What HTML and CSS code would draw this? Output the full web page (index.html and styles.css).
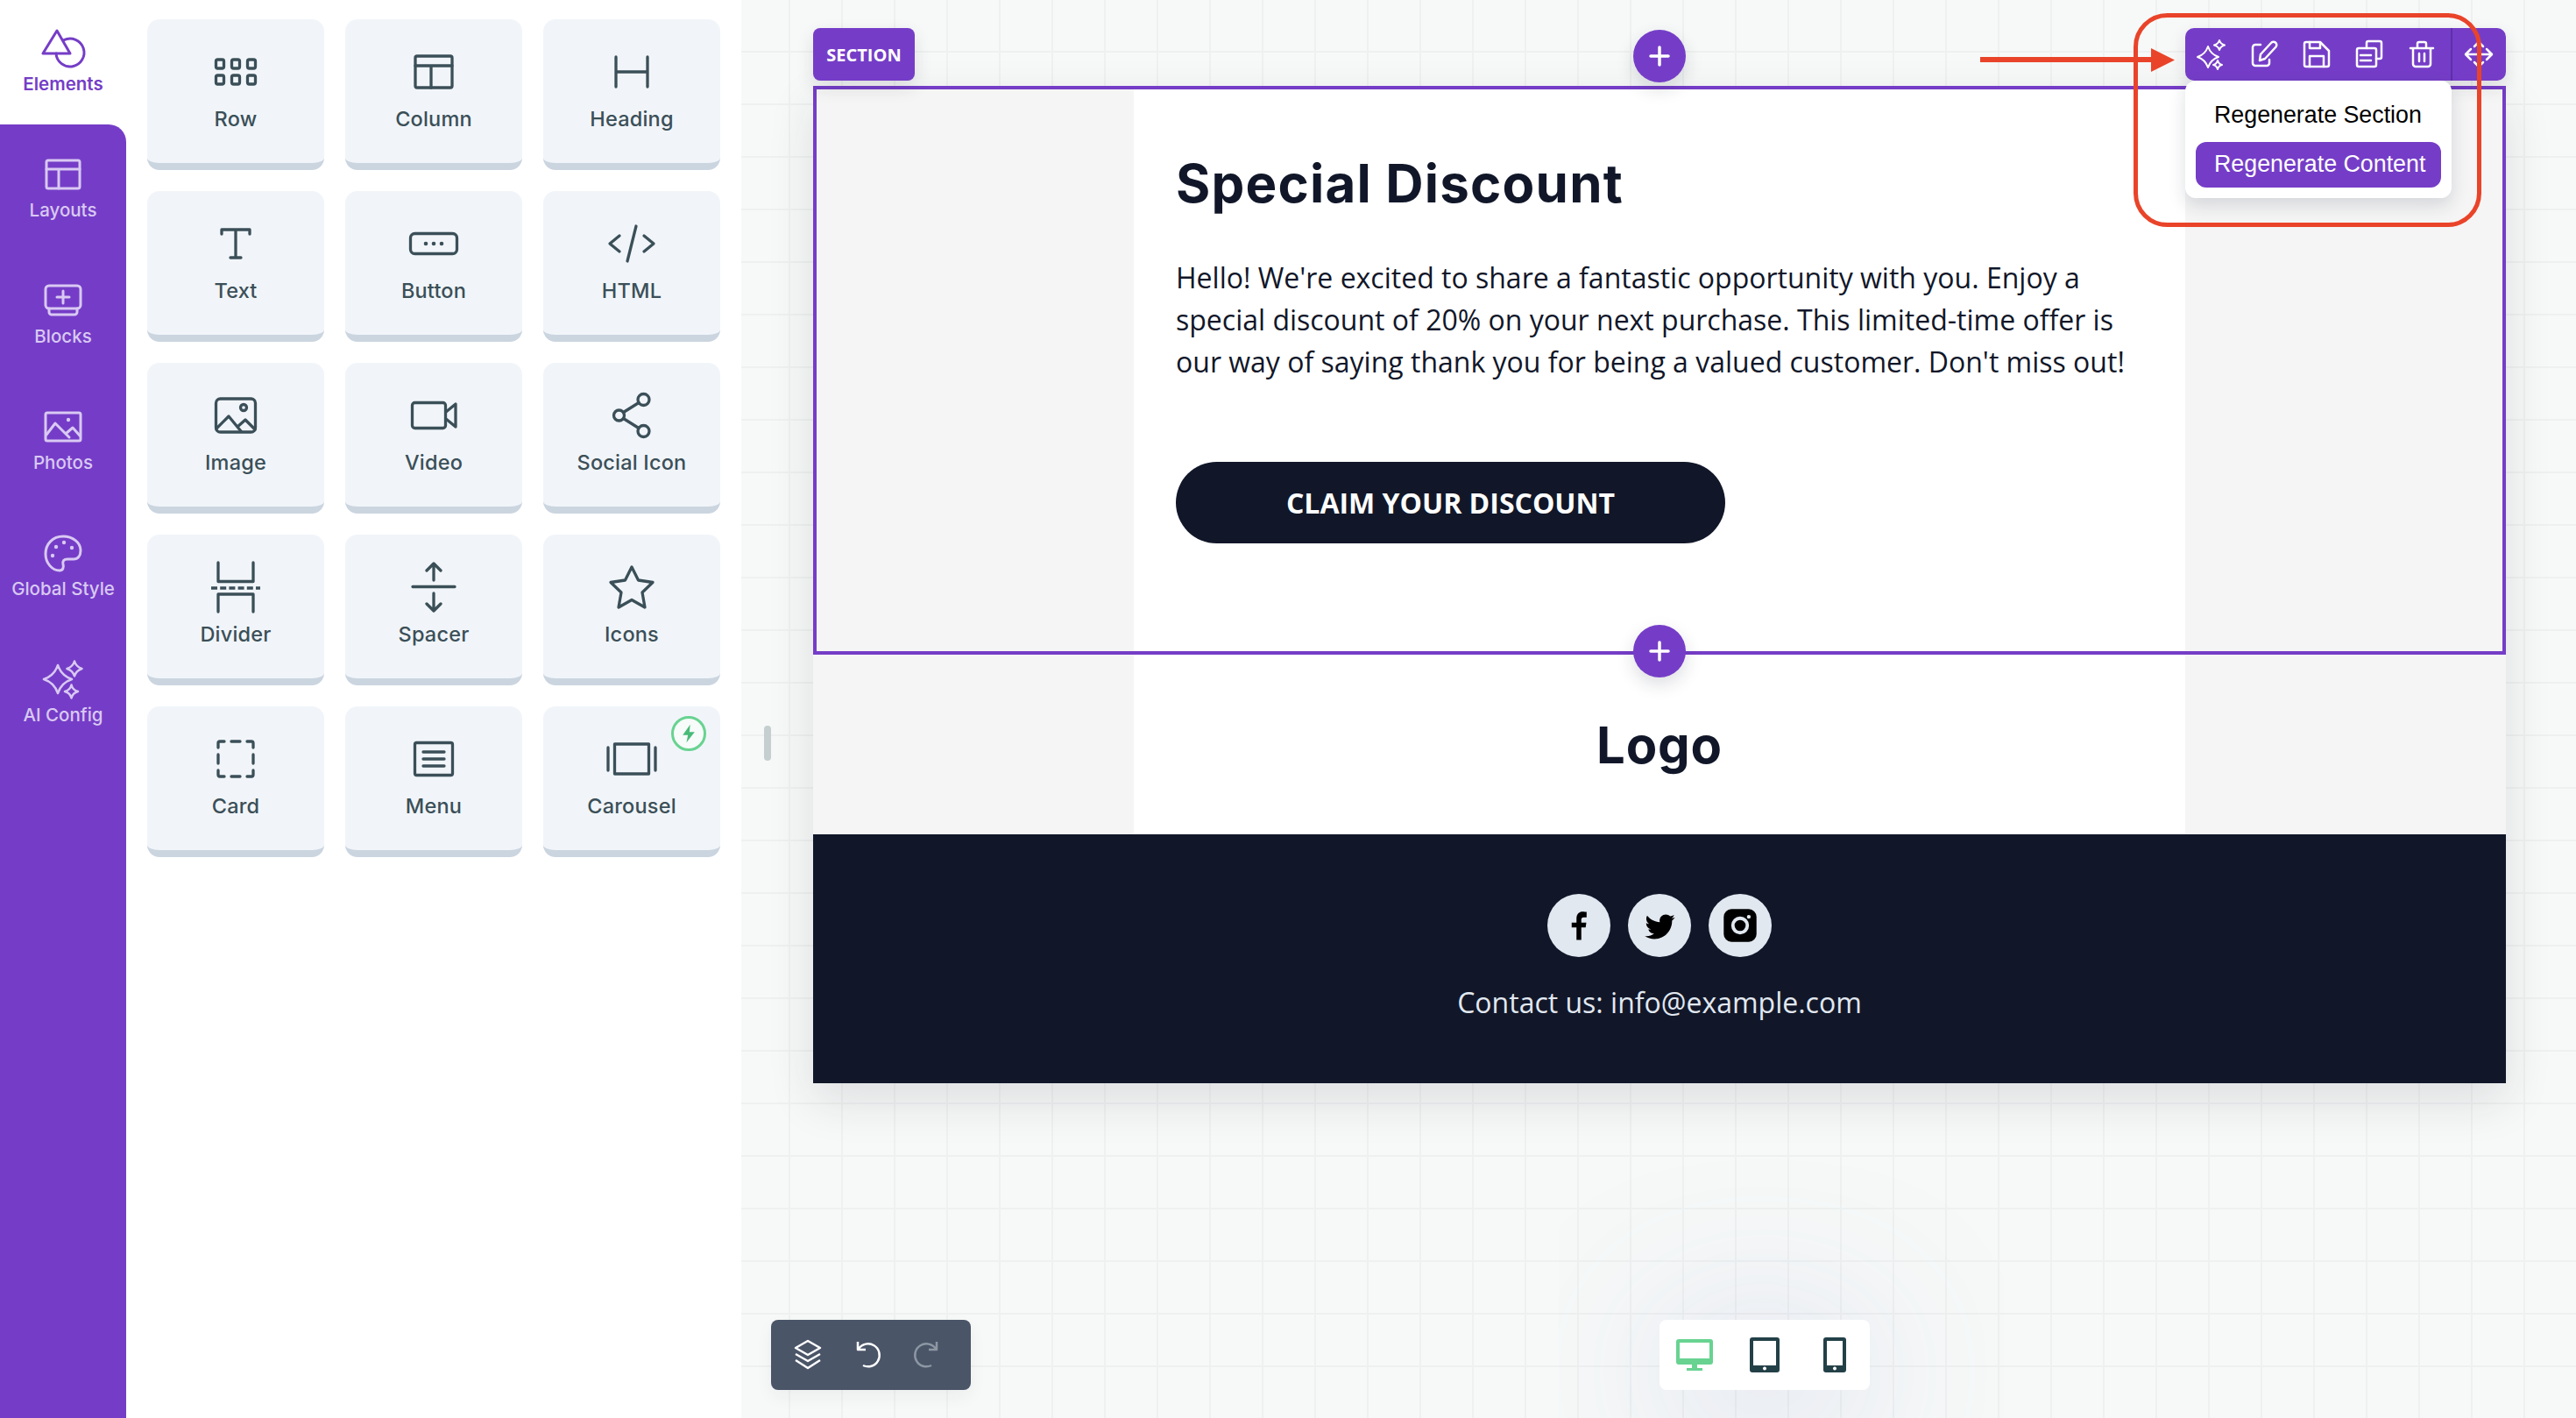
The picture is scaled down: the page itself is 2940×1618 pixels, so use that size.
FILE: index.html
```html
<!DOCTYPE html>
<html lang="en">
<head>
<meta charset="utf-8">
<title>Email builder</title>
<link rel="stylesheet" href="styles.css">
</head>
<body>
<div class="app">
  <nav class="rail">
    <div class="rail-item active">
      <svg class="rail-icon" viewBox="0 0 60 60"><path d="M23 10 7 36H38Z"/><path d="M31 20.600A16 16 0 1 1 22 36"/></svg>
      <span>Elements</span>
    </div>
    <div class="rail-list">
      <div class="rail-item">
        <svg class="rail-icon" viewBox="0 0 60 60"><rect x="11" y="14" width="38" height="32" rx="2"/><path d="M11 24H49M25 24V46"/></svg>
        <span>Layouts</span>
      </div>
      <div class="rail-item">
        <svg class="rail-icon" viewBox="0 0 60 60"><rect x="10" y="13" width="40" height="26" rx="4"/><path d="M30 19V33M23 26H37M14 39V43a3 3 0 0 0 3 3H43a3 3 0 0 0 3-3V39"/></svg>
        <span>Blocks</span>
      </div>
      <div class="rail-item">
        <svg class="rail-icon" viewBox="0 0 60 60"><rect x="10" y="14" width="40" height="32" rx="2"/><path d="M11 39 21 26 37 42M34 37 41 31 49 40"/><circle cx="36" cy="22" r="2.200"/></svg>
        <span>Photos</span>
      </div>
      <div class="rail-item">
        <svg class="rail-icon" viewBox="0 0 60 60"><path d="M30 11C18 11 10 20 10 31 10 42 18 50 26 50 30 50 31 46 30 43 29 39 31 37 35 37H42C47 37 50 33 50 27 50 18 41 11 30 11Z"/><circle cx="22" cy="23" r="2.200"/><circle cx="31" cy="18" r="2.200"/><circle cx="40" cy="24" r="2.200"/><circle cx="18" cy="33" r="2.200"/></svg>
        <span>Global Style</span>
      </div>
      <div class="rail-item">
        <svg class="rail-icon thin" viewBox="0 0 60 60"><path d="M24 14Q28 26 40 30 28 34 24 46 20 34 8 30 20 26 24 14Z"/><path d="M43 9.500Q45 16 51.500 18 45 20 43 26.500 41 20 34.500 18 41 16 43 9.500Z"/><path d="M39.500 36.500Q41 42.500 47 44 41 45.500 39.500 51.500 38 45.500 32 44 38 42.500 39.500 36.500Z"/></svg>
        <span>AI Config</span>
      </div>
    </div>
  </nav>

  <aside class="panel">
    <div class="card">
      <svg class="card-icon" viewBox="0 0 60 60"><rect x="7.500" y="16" width="9" height="10" rx="2"/><rect x="25.500" y="16" width="9" height="10" rx="2"/><rect x="43.500" y="16" width="9" height="10" rx="2"/><rect x="7.500" y="34" width="9" height="10" rx="2"/><rect x="25.500" y="34" width="9" height="10" rx="2"/><rect x="43.500" y="34" width="9" height="10" rx="2"/></svg>
      <span>Row</span>
    </div>
    <div class="card">
      <svg class="card-icon" viewBox="0 0 60 60"><rect x="9" y="12" width="42" height="36" rx="2"/><path d="M9 23H51M27 23V48"/></svg>
      <span>Column</span>
    </div>
    <div class="card">
      <svg class="card-icon" viewBox="0 0 60 60"><path d="M12 13V47M48 13V47M12 30H48"/></svg>
      <span>Heading</span>
    </div>
    <div class="card">
      <svg class="card-icon" viewBox="0 0 60 60"><path d="M14 19V14H46V19M30 14V46M24 46H36"/></svg>
      <span>Text</span>
    </div>
    <div class="card">
      <svg class="card-icon" viewBox="0 0 60 60"><rect x="3.500" y="18.500" width="53" height="23" rx="5"/><circle class="solid" cx="21" cy="30" r="2.300"/><circle class="solid" cx="30" cy="30" r="2.300"/><circle class="solid" cx="39" cy="30" r="2.300"/></svg>
      <span>Button</span>
    </div>
    <div class="card">
      <svg class="card-icon" viewBox="0 0 60 60"><path d="M16 21 5 30 16 39M44 21 55 30 44 39M35 10 25 50"/></svg>
      <span>HTML</span>
    </div>
    <div class="card">
      <svg class="card-icon" viewBox="0 0 60 60"><rect x="7.500" y="11" width="45" height="38" rx="5"/><circle cx="39" cy="21" r="3.500"/><path d="M8 45 22 31 36 48M32 43 41 35 52 46"/></svg>
      <span>Image</span>
    </div>
    <div class="card">
      <svg class="card-icon" viewBox="0 0 60 60"><rect x="5.500" y="15.500" width="38" height="29" rx="3"/><path d="M44 26 55 17V43L44 34"/></svg>
      <span>Video</span>
    </div>
    <div class="card">
      <svg class="card-icon" viewBox="0 0 60 60"><circle cx="15.500" cy="30" r="6"/><circle cx="43.500" cy="12" r="6.500"/><circle cx="43.500" cy="48" r="6.500"/><path d="M20.500 26.500 38 15.500M20.500 33.500 38 44.500"/></svg>
      <span>Social Icon</span>
    </div>
    <div class="card">
      <svg class="card-icon" viewBox="0 0 60 60"><path d="M10 2V23.500H50V2M10 58V38H50V58"/><path class="dash" d="M2 31H58"/></svg>
      <span>Divider</span>
    </div>
    <div class="card">
      <svg class="card-icon" viewBox="0 0 60 60"><path d="M6 29.500H54M30 4V22M22 11 30 3 38 11M30 37V57M22 49 30 57 38 49"/></svg>
      <span>Spacer</span>
    </div>
    <div class="card">
      <svg class="card-icon" viewBox="0 0 60 60"><path d="M30 7 37.500 22 54 24.500 42 36 45 53 30 44.500 15 53 18 36 6 24.500 22.500 22Z"/></svg>
      <span>Icons</span>
    </div>
    <div class="card">
      <svg class="card-icon" viewBox="0 0 60 60"><path d="M10 17V12a2 2 0 0 1 2-2H17M25 10H35M43 10H48a2 2 0 0 1 2 2V17M50 25V35M50 43V48a2 2 0 0 1-2 2H43M35 50H25M17 50H12a2 2 0 0 1-2-2V43M10 35V25"/></svg>
      <span>Card</span>
    </div>
    <div class="card">
      <svg class="card-icon" viewBox="0 0 60 60"><rect x="8.500" y="11.500" width="43" height="37" rx="2"/><path d="M18 22H42M18 30H42M18 38H42"/></svg>
      <span>Menu</span>
    </div>
    <div class="card">
      <span class="badge"><svg viewBox="0 0 40 40"><path d="M22 8 12 22H19L17 32 28 18H21Z"/></svg></span>
      <svg class="card-icon" viewBox="0 0 60 60"><rect x="10.500" y="13" width="39" height="34"/><path d="M3 17V43M57 17V43"/></svg>
      <span>Carousel</span>
    </div>
  </aside>

  <main class="canvas">
    <div class="handle"></div>
    <div class="email">
      <section class="row hero">
        <div class="col">
          <h1>Special Discount</h1>
          <p>Hello! We're excited to share a fantastic opportunity with you. Enjoy a special discount of 20% on your next purchase. This limited-time offer is our way of saying thank you for being a valued customer. Don't miss out!</p>
          <a class="cta">CLAIM YOUR DISCOUNT</a>
        </div>
      </section>
      <section class="row logo-row">
        <div class="col"><h2>Logo</h2></div>
      </section>
      <footer class="footer">
        <div class="socials">
          <span class="social"><svg viewBox="0 0 40 40"><path d="M22.500 35V22H27L27.700 17H22.500V14C22.500 12.500 23.200 11.500 25 11.500H28V6C27 5.800 25.500 5.600 24 5.600 20 5.600 17.500 8 17.500 13V17H12.500V22H17.500V35Z"/></svg></span>
          <span class="social"><svg viewBox="0 0 40 40"><path d="M36 11.500C34.800 12 33.600 12.400 32.300 12.600 33.600 11.800 34.600 10.500 35.100 9 33.900 9.700 32.500 10.300 31.100 10.500 30 9.300 28.300 8.600 26.500 8.600 23 8.600 20.100 11.500 20.100 15 20.100 15.500 20.200 16 20.300 16.500 15 16.200 10.300 13.700 7.200 9.800 6.600 10.800 6.300 11.900 6.300 13 6.300 15.200 7.400 17.200 9.100 18.400 8 18.400 7.100 18.100 6.200 17.600V17.700C6.200 20.800 8.400 23.400 11.300 24 10.800 24.100 10.200 24.200 9.600 24.200 9.200 24.200 8.800 24.200 8.400 24.100 9.200 26.600 11.600 28.500 14.400 28.500 12.200 30.200 9.400 31.200 6.400 31.200 5.900 31.200 5.400 31.200 4.800 31.100 7.700 32.900 11 34 14.700 34 26.500 34 33 24.200 33 15.700V14.900C34.200 14 35.200 12.800 36 11.500Z"/></svg></span>
          <span class="social"><svg viewBox="0 0 40 40"><rect x="3" y="3" width="34" height="34" rx="8"/><circle class="hole" cx="20" cy="20" r="7.500" /><circle class="pin" cx="29" cy="11" r="2"/></svg></span>
        </div>
        <p class="contact">Contact us: info@example.com</p>
      </footer>

      <span class="tag">SECTION</span>
      <button class="plus plus-top"><svg viewBox="0 0 60 60"><path d="M30 20V40M20 30H40"/></svg></button>
      <button class="plus plus-mid"><svg viewBox="0 0 60 60"><path d="M30 20V40M20 30H40"/></svg></button>

      <div class="toolbar">
        <svg class="tool thin" viewBox="0 0 60 60"><path d="M26 21Q29 30 38 33 29 36 26 45 23 36 14 33 23 30 26 21Z"/><path d="M39 14Q40 18 45 19.500 40 21 39 25 38 21 33 19.500 38 18 39 14Z"/><path d="M37 37Q38 41 42 42 38 43 37 47 36 43 32 42 36 41 37 37Z"/></svg>
        <svg class="tool" viewBox="0 0 60 60"><path d="M26 19H20a3 3 0 0 0-3 3V40a3 3 0 0 0 3 3H33a3 3 0 0 0 3-3V36"/><path d="M25 37 26 30 38 17a3.500 3.500 0 0 1 5.500 4.500L31 35Z"/></svg>
        <svg class="tool" viewBox="0 0 60 60"><path d="M18 16H34L44 26V42a2 2 0 0 1-2 2H18a2 2 0 0 1-2-2V18a2 2 0 0 1 2-2Z"/><path d="M22 16V23H34V17M22 44V32H38V44"/></svg>
        <svg class="tool" viewBox="0 0 60 60"><path d="M27 23V17a2 2 0 0 1 2-2H42a2 2 0 0 1 2 2V33a2 2 0 0 1-2 2H38"/><rect x="16" y="23" width="22" height="21" rx="2"/><path d="M20 31H32M20 37H32"/></svg>
        <svg class="tool" viewBox="0 0 60 60"><path d="M17 23H43M25 23V18a2 2 0 0 1 2-2H33a2 2 0 0 1 2 2V23M20 23V41a3 3 0 0 0 3 3H37a3 3 0 0 0 3-3V23M27 29V38M33 29V38"/></svg>
        <svg class="tool tool-last" viewBox="0 0 60 60"><path d="M16 30H44M21 24 15 30 21 36M39 24 45 30 39 36M25 21 30 16 35 21M25 39 30 44 35 39"/></svg>
      </div>
      <div class="popup">
        <span class="pop-item pop-plain">Regenerate Section</span>
        <span class="pop-item pop-active">Regenerate Content</span>
      </div>
    </div>

    <div class="floating history">
      <svg viewBox="0 0 60 60"><path d="M30 14 44 22 30 30 16 22ZM16 29 30 37 44 29M16 36 30 45 44 36"/></svg>
      <svg viewBox="0 0 60 60"><path d="M20 23A13 13 0 1 1 25 42M19 15V24H28"/></svg>
      <svg class="off" viewBox="0 0 60 60"><path d="M40 23A13 13 0 1 0 35 42M41 15V24H32"/></svg>
    </div>
    <div class="floating devices">
      <svg class="desktop" viewBox="0 0 60 60"><path d="M12 12H48a3 3 0 0 1 3 3V38a3 3 0 0 1-3 3H33V45H39V48H21V45H27V41H12a3 3 0 0 1-3-3V15a3 3 0 0 1 3-3ZM13 16V34H47V16Z"/><path d="M13 36.500H47V37.500H13Z"/></svg>
      <svg viewBox="0 0 60 60"><path d="M16 10H44a3 3 0 0 1 3 3V47a3 3 0 0 1-3 3H16a3 3 0 0 1-3-3V13a3 3 0 0 1 3-3ZM17 14V42H43V14ZM30 43.500a2 2 0 1 0 .01 0Z"/></svg>
      <svg viewBox="0 0 60 60"><path d="M20 10H40a3 3 0 0 1 3 3V47a3 3 0 0 1-3 3H20a3 3 0 0 1-3-3V13a3 3 0 0 1 3-3ZM21 14V42H39V14ZM30 43.500a2 2 0 1 0 .01 0Z"/></svg>
    </div>

    <svg class="annotation" viewBox="0 0 600 270">
      <rect x="177.500" y="17.500" width="392" height="239" rx="36"/>
      <path class="arrow-line" d="M0 68H200"/>
      <path class="arrow-head" d="M195 55 222 68.500 195 82Z"/>
    </svg>
  </main>
</div>
</body>
</html>
```
FILE: styles.css
```css
* { box-sizing: border-box; }
html, body { margin: 0; height: 100%; overflow: hidden; }
body { font-family: "Inter", "Liberation Sans", sans-serif; background: #fff; }
.app { display: flex; width: 2940px; height: 1618px; }

/* left rail */
.rail { width: 144px; flex: none; display: flex; flex-direction: column; background: #fff; }
.rail-list { flex: 1; background: #753dc7; border-top-right-radius: 20px; padding-top: 2px; }
.rail-item { display: flex; flex-direction: column; align-items: center; height: 144px; padding-top: 25px; color: #d9c9f3; font-size: 20.500px; font-weight: 500; line-height: 28px; }
.rail-item.active { height: 142px; color: #753dc7; font-weight: 600; }
.rail-icon { width: 60px; height: 60px; margin-bottom: -3px; fill: none; stroke: currentColor; stroke-width: 3; stroke-linejoin: round; stroke-linecap: round; }
.rail-icon circle { fill: currentColor; stroke: none; }
.rail-icon.thin { stroke-width: 2.500; }

/* element panel */
.panel { width: 702px; flex: none; background: #fff; padding: 22px 24px; display: grid; grid-template-columns: repeat(3, 202px); grid-auto-rows: 172px; gap: 24px; align-content: start; }
.card { position: relative; display: flex; flex-direction: column; align-items: center; padding-top: 30px; background: #f1f5f9; border-bottom: 8px solid #cbd5e0; border-radius: 14px; color: #3b4f58; font-size: 23.500px; letter-spacing: .2px; font-weight: 500; line-height: 30px; }
.card-icon { width: 60px; height: 60px; margin-bottom: 9px; fill: none; stroke: #3b4f58; stroke-width: 3.300; stroke-linejoin: round; stroke-linecap: round; }
.card-icon .solid { fill: #3b4f58; stroke: none; }
.card-icon .dash { stroke-dasharray: 7 3.200; stroke-linecap: butt; }
.badge { position: absolute; top: 11px; right: 16px; width: 40px; height: 40px; border: 3px solid #68d391; border-radius: 50%; background: #f7fbf9; display: flex; align-items: center; justify-content: center; }
.badge svg { width: 34px; height: 34px; fill: #48bb78; flex: none; }

/* canvas */
.canvas { position: relative; flex: 1; padding: 98px 0 0 82px; background-color: #f7f9f8; background-image: linear-gradient(#eff1f0 2px, transparent 2px), linear-gradient(90deg, #eff1f0 2px, transparent 2px); background-size: 60px 60px; background-position: 54px 58px; }
.handle { position: absolute; left: 26px; top: 828px; width: 8px; height: 40px; border-radius: 4px; background: #c5cfd0; }

.email { position: relative; width: 1932px; background: #f5f5f5; box-shadow: 0 20px 50px rgba(30, 35, 60, .12); color: #111729; }
.row { display: flex; justify-content: center; }
.col { width: 1200px; background: #fff; }
.hero { height: 649px; border: 4px solid #753dc7; }
.hero .col { padding: 69px 48px 0; }
h1 { margin: 0 0 46px; font-size: 60px; letter-spacing: 1.200px; line-height: 76px; font-weight: 700; }
.hero p { margin: 0; font-family: "Open Sans", sans-serif; font-size: 32px; line-height: 48px; }
.cta { display: flex; align-items: center; justify-content: center; width: 627px; height: 93px; margin-top: 90px; border-radius: 47px; background: #111729; color: #fff; font-family: "Open Sans", sans-serif; font-size: 32px; font-weight: 700; }
.logo-row { height: 205px; }
.logo-row .col { display: flex; align-items: center; justify-content: center; }
h2 { margin: 0; font-size: 58px; letter-spacing: .8px; font-weight: 700; line-height: 76px; }
.footer { height: 284px; padding-top: 68px; background: #111729; display: flex; flex-direction: column; align-items: center; }
.socials { display: flex; gap: 20px; }
.social { width: 72px; height: 72px; border-radius: 50%; background: #e2e8f0; display: flex; align-items: center; justify-content: center; }
.social svg { width: 44px; height: 44px; fill: #000; }
.social .hole { fill: none; stroke: #e2e8f0; stroke-width: 3.500; }
.social .pin { fill: #e2e8f0; }
.contact { margin: 28px 0 0; font-family: "Open Sans", sans-serif; font-size: 32px; line-height: 48px; color: #e2e8f0; }

/* overlays on the section */
.tag { position: absolute; left: 0; top: -66px; width: 116px; height: 60px; border-radius: 8px; background: #753dc7; color: #fff; font-family: "Open Sans", sans-serif; font-size: 20px; font-weight: 700; display: flex; align-items: center; justify-content: center; box-shadow: 0 8px 20px rgba(30, 35, 60, .12); }
.plus { position: absolute; left: 936px; width: 60px; height: 60px; padding: 0; border: 0; border-radius: 50%; background: #753dc7; box-shadow: 0 8px 20px rgba(30, 35, 60, .15); }
.plus svg { display: block; width: 60px; height: 60px; fill: none; stroke: #fff; stroke-width: 3.500; stroke-linecap: round; }
.plus-top { top: -64px; }
.plus-mid { top: 615px; }
.toolbar { position: absolute; right: 0; top: -66px; width: 366px; height: 60px; display: flex; background: #753dc7; border-radius: 10px; box-shadow: 0 8px 20px rgba(30, 35, 60, .12); }
.tool { width: 60px; height: 60px; flex: none; fill: none; stroke: #fff; stroke-width: 2.500; stroke-linejoin: round; stroke-linecap: round; }
.tool.thin { stroke-width: 2; }
.tool-last { box-sizing: content-box; margin-left: 3px; border-left: 2px solid #5f2fa8; }
.popup { position: absolute; right: 62px; top: -6px; width: 304px; height: 134px; padding: 12px; border-radius: 12px; background: #fff; box-shadow: 0 8px 20px rgba(30, 35, 60, .15); display: flex; flex-direction: column; gap: 6px; font-family: "Liberation Sans", Arial, sans-serif; font-size: 26.800px; color: #000; }
.pop-item { height: 55px; padding-left: 21px; display: flex; align-items: center; border-radius: 12px; }
.pop-plain { padding-top: 2px; }
.pop-active { padding-bottom: 2px; background: #753dc7; color: #fff; }

/* floating controls */
.floating { position: absolute; top: 1506px; height: 80px; display: flex; align-items: center; border-radius: 8px; }
.floating svg { flex: none; }
.history { left: 34px; width: 228px; padding-left: 12px; background: #4a5568; box-shadow: 0 8px 20px rgba(30, 35, 60, .05); gap: 8px; }
.history svg { width: 60px; height: 60px; fill: none; stroke: #fff; stroke-width: 2.500; stroke-linejoin: round; }
.history .off { stroke: #8d97a3; }
.devices { left: 1048px; width: 240px; padding-left: 10px; background: #fff; gap: 20px; box-shadow: 0 20px 200px rgba(90, 100, 190, .28); }
.devices svg { width: 60px; height: 60px; fill: #234047; fill-rule: evenodd; }
.devices .desktop { fill: #68d391; }

/* red call-out drawn on top of the screenshot */
.annotation { position: absolute; left: 1414px; top: 0; width: 600px; height: 270px; fill: none; stroke: #e9442a; stroke-width: 5; }
.annotation .arrow-line { stroke-width: 6; }
.annotation .arrow-head { fill: #e9442a; stroke: none; }
```
